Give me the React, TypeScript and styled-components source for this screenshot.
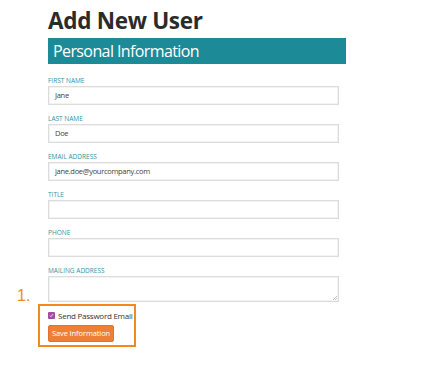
import React from "react";
import styled, { createGlobalStyle } from "styled-components";

const Global = createGlobalStyle`
  html, body { margin: 0; padding: 0; background: #fff; }
  body { font-family: "Open Sans", "Noto Sans", sans-serif; }
`;

const Page = styled.div`
  width: 421px;
  height: 374px;
  padding: 6px 0 0 48px;
  box-sizing: border-box;
  overflow: hidden;
`;

const Title = styled.h1`
  margin: 0;
  font-size: 22.5px;
  line-height: 30px;
  font-weight: 700;
  color: #2b2b2b;
  letter-spacing: -0.3px;
`;

const SectionBar = styled.div`
  margin-top: 2px;
  width: 298px;
  height: 26px;
  background: #1c8b97;
  color: #fff;
  font-size: 16px;
  letter-spacing: -0.6px;
  line-height: 26px;
  padding-left: 5px;
  box-sizing: border-box;
`;

const Form = styled.div`
  width: 291px;
  margin-top: 13px;
  display: flex;
  flex-direction: column;
  gap: 10px;
`;

const Field = styled.div`
  display: flex;
  flex-direction: column;
  gap: 2px;
`;

const Label = styled.label`
  font-size: 6.5px;
  line-height: 7px;
  color: #3294a4;
  text-transform: uppercase;
`;

const Input = styled.div<{ $tall?: boolean }>`
  height: ${(p) => (p.$tall ? 26 : 19)}px;
  border: 1px solid #dcdcdc;
  box-shadow: inset 0 0 0 0.5px #e8e8e8;
  box-sizing: border-box;
  padding-left: 6px;
  font-size: 7.5px;
  letter-spacing: -0.3px;
  line-height: 17px;
  color: #444;
  position: relative;
`;

const Grip = styled.svg`
  position: absolute;
  right: 1px;
  bottom: 1px;
`;

const Highlight = styled.div`
  position: relative;
  margin: 2px 0 0 -10px;
  width: 98px;
  height: 43px;
  border: 2px solid #f28a1e;
  box-sizing: border-box;
  padding: 5px 0 0 8px;
  display: flex;
  flex-direction: column;
  gap: 5px;
`;

const Marker = styled.span`
  position: absolute;
  left: -23px;
  top: -18px;
  font-size: 16px;
  line-height: 16px;
  color: #f28a1e;
  font-family: "Liberation Sans", Arial, sans-serif;
`;

const CheckRow = styled.div`
  display: flex;
  align-items: center;
  gap: 3px;
  white-space: nowrap;
  font-size: 8px;
  letter-spacing: -0.25px;
  line-height: 9px;
  color: #333;
`;

const Box = styled.span`
  flex: none;
  width: 7px;
  height: 7px;
  background: #a24ea6;
  border-radius: 1px;
  display: inline-flex;
  align-items: center;
  justify-content: center;
`;

const Button = styled.button`
  align-self: flex-start;
  width: 66px;
  height: 17px;
  padding: 0;
  border: 1px solid #e27428;
  border-radius: 2px;
  background: #f07f36;
  color: #fff;
  font-family: "Open Sans", sans-serif;
  font-size: 7.5px;
  letter-spacing: -0.1px;
  line-height: 15px;
  white-space: nowrap;
`;

const fields = [
  { label: "First Name", value: "Jane" },
  { label: "Last Name", value: "Doe" },
  { label: "Email Address", value: "jane.doe@yourcompany.com" },
  { label: "Title", value: "" },
  { label: "Phone", value: "" },
];

export default function App() {
  return (
    <Page>
      <Global />
      <Title>Add New User</Title>
      <SectionBar>Personal Information</SectionBar>
      <Form>
        {fields.map((f) => (
          <Field key={f.label}>
            <Label>{f.label}</Label>
            <Input>{f.value}</Input>
          </Field>
        ))}
        <Field>
          <Label>Mailing Address</Label>
          <Input $tall>
            <Grip width="5" height="5" viewBox="0 0 5 5">
              <path d="M1 5 L5 1 M3 5 L5 3" stroke="#999" strokeWidth="0.6" />
            </Grip>
          </Input>
        </Field>
      </Form>
      <Highlight>
        <Marker>1.</Marker>
        <CheckRow>
          <Box>
            <svg width="5" height="5" viewBox="0 0 5 5">
              <path d="M1 2.6 L2 3.6 L4 1.2" stroke="#fff" strokeWidth="0.8" fill="none" />
            </svg>
          </Box>
          Send Password Email
        </CheckRow>
        <Button>Save Information</Button>
      </Highlight>
    </Page>
  );
}
